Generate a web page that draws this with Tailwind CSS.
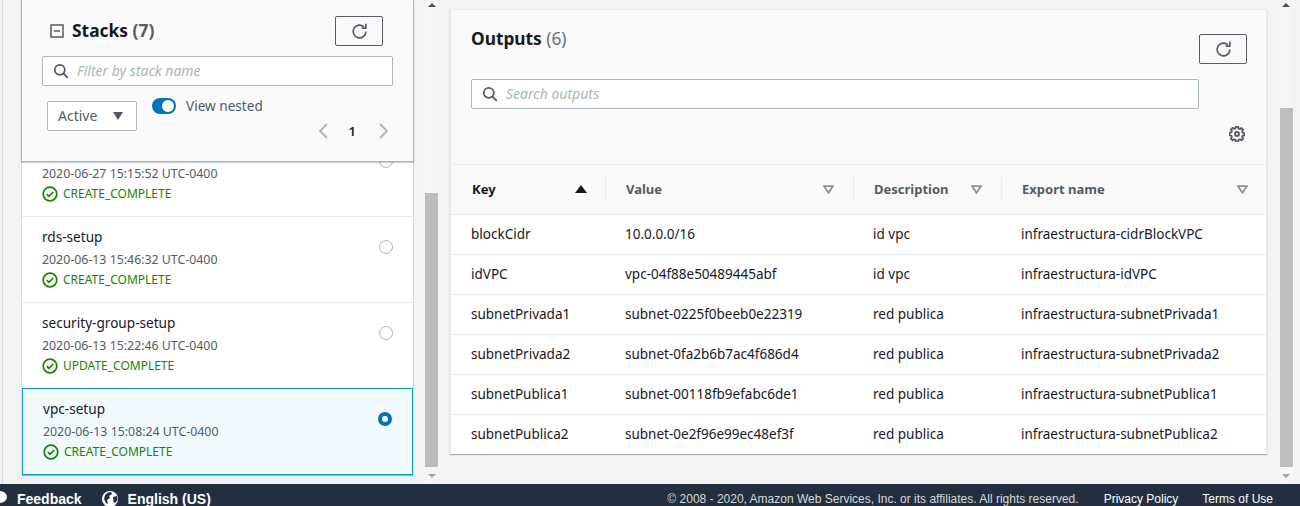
<!DOCTYPE html>
<html lang="en">
<head>
<meta charset="UTF-8">
<title>CloudFormation - Stack outputs</title>
<script src="https://cdn.jsdelivr.net/npm/@tailwindcss/browser@4"></script>
</head>
<body class="bg-[#f2f3f3] font-['Noto_Sans',sans-serif] text-[#16191f] w-[1300px] h-[506px] overflow-hidden">
<div class="flex h-[484px] overflow-hidden">
  <!-- Left pane -->
  <div class="w-[21px] shrink-0 pl-[2px]"><div class="w-px h-full bg-[#d5dbdb]"></div></div>
  <div class="w-[393px] shrink-0 h-[475px] flex flex-col">
    <div class="relative z-10 h-[162px] shrink-0 bg-[#fafafa] border-x border-b border-[#aab7b8] shadow-[0_1px_1px_rgba(0,28,36,0.2)] pt-4 px-5">
      <div class="flex items-center justify-between h-[30px] pr-[10px]">
        <div class="flex items-center pl-[8px]">
          <svg class="w-[14px] h-[14px]" viewBox="0 0 14 14" fill="none" stroke="#545b64" stroke-width="1.5"><rect x="1" y="1" width="12" height="12"/><path d="M4 7h6"/></svg>
          <h2 class="ml-2 mb-[2px] text-[17.4px] leading-[26px] font-bold">Stacks <span class="text-[#545b64]">(7)</span></h2>
        </div>
        <button class="w-[48px] h-[30px] border border-[#545b64] rounded-[2px] flex items-center justify-center">
          <svg class="w-[17px] h-[17px]" viewBox="0 0 16 16" fill="none" stroke="#545b64" stroke-width="1.6"><path d="M14 8a6 6 0 1 1-1.9-4.4"/><path d="M14 .8v4h-4"/></svg>
        </button>
      </div>
      <div class="mt-[10px] h-[30px] bg-white border border-[#aab7b8] rounded-[2px] flex items-center pl-[10px]">
        <svg class="w-4 h-4" viewBox="0 0 16 16" fill="none" stroke="#545b64" stroke-width="1.8"><circle cx="6.8" cy="6.8" r="5"/><path d="M10.5 10.5l4.3 4.3"/></svg>
        <span class="ml-[8px] mb-[2px] text-[14px] italic text-[#aab7b8]">Filter by stack name</span>
      </div>
      <div class="flex items-start mt-3 pl-[5px]">
        <div class="mt-[3px] w-[90px] h-[30px] bg-white border border-[#aab7b8] rounded-[2px] flex items-center justify-between pl-[10px] pr-[12px] text-[14px] text-[#545b64]">
          <span class="mb-[2px]">Active</span>
          <svg class="w-[12px] h-[10px]" viewBox="0 0 12 10"><path d="M1 1h10L6 9z" fill="#545b64"/></svg>
        </div>
        <div class="ml-[15px] w-[24px] h-4 rounded-full bg-[#0073bb] relative">
          <span class="absolute right-[2px] top-[2px] w-3 h-3 rounded-full bg-white"></span>
        </div>
        <div class="ml-[10px] flex-1">
          <div class="text-[13.6px] leading-4 text-[#545b64]">View nested</div>
          <div class="mt-[9px] flex items-center justify-end text-[13px] font-semibold">
            <svg class="w-[10px] h-4" viewBox="0 0 10 16" fill="none" stroke="#aab7b8" stroke-width="1.8"><path d="M9 1L2 8l7 7"/></svg>
            <span class="ml-[21px] mr-[23px] leading-4 text-[#16191f]">1</span>
            <svg class="w-[10px] h-4 mr-[4px]" viewBox="0 0 10 16" fill="none" stroke="#aab7b8" stroke-width="1.8"><path d="M1 1l7 7-7 7"/></svg>
          </div>
        </div>
      </div>
    </div>
    <div class="mt-[-31px] flex-1 bg-white border-x border-[#d5dbdb]">
      <div class="h-[86px] border-b border-[#eaeded] px-5 pt-[10px] flex justify-between">
        <div>
          <div class="text-[13.6px] leading-5 h-[23px]">nested-setup</div>
          <div class="text-[12.35px] leading-5 text-[#545b64]">2020-06-27 15:15:52 UTC-0400</div>
          <div class="flex items-center text-[12px] leading-5 text-[#1d8102]">
            <svg class="w-4 h-4 mr-[5px]" viewBox="0 0 16 16" fill="none" stroke="#1d8102" stroke-width="1.7"><circle cx="8" cy="8" r="6.8"/><path d="M4.8 8.2l2.2 2.2 4.2-4.4"/></svg>CREATE_COMPLETE</div>
        </div>
        <span class="mt-[13px] w-[14px] h-[14px] rounded-full border border-[#aab7b8] bg-white"></span>
      </div>
      <div class="h-[86px] border-b border-[#eaeded] px-5 pt-[10px] flex justify-between">
        <div>
          <div class="text-[13.6px] leading-5 h-[23px]">rds-setup</div>
          <div class="text-[12.35px] leading-5 text-[#545b64]">2020-06-13 15:46:32 UTC-0400</div>
          <div class="flex items-center text-[12px] leading-5 text-[#1d8102]">
            <svg class="w-4 h-4 mr-[5px]" viewBox="0 0 16 16" fill="none" stroke="#1d8102" stroke-width="1.7"><circle cx="8" cy="8" r="6.8"/><path d="M4.8 8.2l2.2 2.2 4.2-4.4"/></svg>CREATE_COMPLETE</div>
        </div>
        <span class="mt-[13px] w-[14px] h-[14px] rounded-full border border-[#aab7b8] bg-white"></span>
      </div>
      <div class="h-[86px] px-5 pt-[10px] flex justify-between">
        <div>
          <div class="text-[13.6px] leading-5 h-[23px]">security-group-setup</div>
          <div class="text-[12.35px] leading-5 text-[#545b64]">2020-06-13 15:22:46 UTC-0400</div>
          <div class="flex items-center text-[12px] leading-5 text-[#1d8102]">
            <svg class="w-4 h-4 mr-[5px]" viewBox="0 0 16 16" fill="none" stroke="#1d8102" stroke-width="1.7"><circle cx="8" cy="8" r="6.8"/><path d="M4.8 8.2l2.2 2.2 4.2-4.4"/></svg>UPDATE_COMPLETE</div>
        </div>
        <span class="mt-[13px] w-[14px] h-[14px] rounded-full border border-[#aab7b8] bg-white"></span>
      </div>
    </div>
    <div class="relative mx-px h-[87px] shrink-0 -mt-px bg-[#f1faff] border border-[#00a1c9] shadow-[0_1px_1px_rgba(0,28,36,0.3)] px-5 pt-[10px] flex justify-between">
      <div>
        <div class="text-[13.6px] leading-5 h-[23px]">vpc-setup</div>
        <div class="text-[12.35px] leading-5 text-[#545b64]">2020-06-13 15:08:24 UTC-0400</div>
        <div class="flex items-center text-[12px] leading-5 text-[#1d8102]">
          <svg class="w-4 h-4 mr-[5px]" viewBox="0 0 16 16" fill="none" stroke="#1d8102" stroke-width="1.7"><circle cx="8" cy="8" r="6.8"/><path d="M4.8 8.2l2.2 2.2 4.2-4.4"/></svg>CREATE_COMPLETE</div>
      </div>
      <span class="mt-[13px] w-[14px] h-[14px] rounded-full border-[4px] border-[#0073bb] bg-white"></span>
    </div>
  </div>

  <!-- Left scrollbar -->
  <div class="ml-[10px] w-[15px] shrink-0 bg-[#f5f5f5] h-[484px] flex flex-col items-center justify-between pt-[3px] pb-[6px]">
    <svg class="w-2 h-1" viewBox="0 0 8 4"><path d="M0 4h8L4 0z" fill="#505050"/></svg>
    <div class="w-[13px] h-[274px] bg-[#bdbdbd] mt-[178px]"></div>
    <svg class="w-2 h-1" viewBox="0 0 8 4"><path d="M0 0h8L4 4z" fill="#a3a3a3"/></svg>
  </div>

  <!-- Outputs card -->
  <div class="ml-[11px] mt-[9px] w-[817px] h-[445px] shrink-0 bg-white border-x border-t border-[#eaeded] shadow-[0_1px_1px_rgba(0,28,36,0.3)]">
    <div class="h-[155px] bg-[#fafafa] border-b border-[#eaeded] pl-5 pr-[19px]">
      <div class="flex">
        <div class="w-[728px]">
          <h2 class="pt-[16px] text-[17.3px] leading-[26px] font-bold">Outputs <span class="font-normal text-[#687078]">(6)</span></h2>
          <div class="mt-[27px] h-[30px] bg-white border border-[#aab7b8] rounded-[2px] flex items-center pl-[10px]">
            <svg class="w-4 h-4" viewBox="0 0 16 16" fill="none" stroke="#545b64" stroke-width="1.8"><circle cx="6.8" cy="6.8" r="5"/><path d="M10.5 10.5l4.3 4.3"/></svg>
            <span class="ml-[8px] mb-[2px] text-[14px] italic text-[#aab7b8]">Search outputs</span>
          </div>
        </div>
        <button class="mt-[24px] w-[48px] h-[30px] border border-[#545b64] rounded-[2px] flex items-center justify-center">
          <svg class="w-[17px] h-[17px]" viewBox="0 0 16 16" fill="none" stroke="#545b64" stroke-width="1.6"><path d="M14 8a6 6 0 1 1-1.9-4.4"/><path d="M14 .8v4h-4"/></svg>
        </button>
      </div>
      <div class="flex justify-end mt-[17px] pr-[2px]">
        <svg class="w-4 h-4" viewBox="0 0 16 16" fill="none" stroke="#545b64" stroke-linejoin="round" stroke-width="1.9"><circle cx="8" cy="8" r="2"/><path d="M6.8 1h2.4l.4 1.8 1.2.5 1.6-1 1.7 1.7-1 1.6.5 1.2 1.8.4v2.4l-1.8.4-.5 1.2 1 1.6-1.7 1.7-1.6-1-1.2.5-.4 1.8H6.8l-.4-1.8-1.2-.5-1.6 1-1.7-1.7 1-1.6-.5-1.2L.6 9.4V7l1.8-.4.5-1.2-1-1.6 1.7-1.7 1.6 1 1.2-.5z" transform="translate(0 -.2)"/></svg>
      </div>
    </div>
    <table class="w-[815px] table-fixed border-collapse text-[13.5px]">
      <thead>
        <tr class="h-[49px] bg-[#fafafa] border-b border-[#eaeded] text-left text-[13px] font-bold text-[#545b64]">
          <th class="w-[155px] p-0 pl-[21px] font-bold text-[#16191f]">
            <div class="flex items-center justify-between h-[24px] border-r border-[#eaeded] pr-[18px]">Key
              <svg class="w-[12px] h-2" viewBox="0 0 12 8"><path d="M0 8h12L6 0z" fill="#16191f"/></svg></div>
          </th>
          <th class="w-[248px] p-0 pl-[20px]">
            <div class="flex items-center justify-between h-[24px] border-r border-[#eaeded] pr-[19px]">Value
              <svg class="w-[11px] h-[9px]" viewBox="0 0 10 8"><path d="M1 1h8L5 7z" fill="none" stroke="#879596" stroke-width="1.6"/></svg></div>
          </th>
          <th class="w-[148px] p-0 pl-[20px]">
            <div class="flex items-center justify-between h-[24px] border-r border-[#eaeded] pr-[19px]">Description
              <svg class="w-[11px] h-[9px]" viewBox="0 0 10 8"><path d="M1 1h8L5 7z" fill="none" stroke="#879596" stroke-width="1.6"/></svg></div>
          </th>
          <th class="p-0 pl-[20px]">
            <div class="flex items-center justify-between h-[24px] pr-[18px]">Export name
              <svg class="w-[11px] h-[9px]" viewBox="0 0 10 8"><path d="M1 1h8L5 7z" fill="none" stroke="#879596" stroke-width="1.6"/></svg></div>
          </th>
        </tr>
      </thead>
      <tbody>
        <tr class="h-[40px] border-b border-[#eaeded]"><td class="p-0 pl-5">blockCidr</td><td class="p-0 pl-[19px]">10.0.0.0/16</td><td class="p-0 pl-[19px]">id vpc</td><td class="p-0 pl-[19px]">infraestructura-cidrBlockVPC</td></tr>
        <tr class="h-[40px] border-b border-[#eaeded]"><td class="p-0 pl-5">idVPC</td><td class="p-0 pl-[19px]">vpc-04f88e50489445abf</td><td class="p-0 pl-[19px]">id vpc</td><td class="p-0 pl-[19px]">infraestructura-idVPC</td></tr>
        <tr class="h-[40px] border-b border-[#eaeded]"><td class="p-0 pl-5">subnetPrivada1</td><td class="p-0 pl-[19px]">subnet-0225f0beeb0e22319</td><td class="p-0 pl-[19px]">red publica</td><td class="p-0 pl-[19px]">infraestructura-subnetPrivada1</td></tr>
        <tr class="h-[40px] border-b border-[#eaeded]"><td class="p-0 pl-5">subnetPrivada2</td><td class="p-0 pl-[19px]">subnet-0fa2b6b7ac4f686d4</td><td class="p-0 pl-[19px]">red publica</td><td class="p-0 pl-[19px]">infraestructura-subnetPrivada2</td></tr>
        <tr class="h-[40px] border-b border-[#eaeded]"><td class="p-0 pl-5">subnetPublica1</td><td class="p-0 pl-[19px]">subnet-00118fb9efabc6de1</td><td class="p-0 pl-[19px]">red publica</td><td class="p-0 pl-[19px]">infraestructura-subnetPublica1</td></tr>
        <tr class="h-[40px]"><td class="p-0 pl-5">subnetPublica2</td><td class="p-0 pl-[19px]">subnet-0e2f96e99ec48ef3f</td><td class="p-0 pl-[19px]">red publica</td><td class="p-0 pl-[19px]">infraestructura-subnetPublica2</td></tr>
      </tbody>
    </table>
  </div>

  <!-- Right scrollbar -->
  <div class="ml-[12px] w-[14px] shrink-0 bg-[#f5f5f5] h-[484px] flex flex-col items-center justify-between pt-[3px] pb-[6px]">
    <svg class="w-2 h-1" viewBox="0 0 8 4"><path d="M0 4h8L4 0z" fill="#505050"/></svg>
    <div class="w-[13px] h-[359px] bg-[#bdbdbd] mt-[93px]"></div>
    <svg class="w-2 h-1" viewBox="0 0 8 4"><path d="M0 0h8L4 4z" fill="#a3a3a3"/></svg>
  </div>
</div>

<!-- Footer -->
<footer class="h-[22px] bg-[#232f3e] flex items-start pt-[7px] font-['Liberation_Sans',sans-serif] text-white overflow-hidden">
  <svg class="w-[14px] h-[14px] ml-[-7px] mr-[10px] shrink-0" viewBox="0 0 14 14"><path d="M7 0a7 6 0 0 1 0 12l-3 2v-3A7 6 0 0 1 7 0z" fill="#fff"/></svg>
  <span class="text-[14px] leading-4 font-bold">Feedback</span>
  <svg class="ml-[20px] w-[16px] h-[16px] shrink-0" viewBox="0 0 16 16"><circle cx="8" cy="8" r="8" fill="#fff"/><path d="M6 1.5l3-.5 1 2-3 2 1 2-3 2 1 4-2-1-2-4 1-4zM11 6l4-1 .5 4-2.5 3-1.5-1z" fill="#232f3e"/></svg>
  <span class="ml-[10px] text-[14px] leading-4 font-bold">English (US)</span>
  <span class="ml-auto text-[12px] leading-4 text-[#d5dbdb]">© 2008 - 2020, Amazon Web Services, Inc. or its affiliates. All rights reserved.</span>
  <span class="ml-[25px] text-[12px] leading-4">Privacy Policy</span>
  <span class="ml-[24px] mr-[27px] text-[12px] leading-4">Terms of Use</span>
</footer>
</body>
</html>
